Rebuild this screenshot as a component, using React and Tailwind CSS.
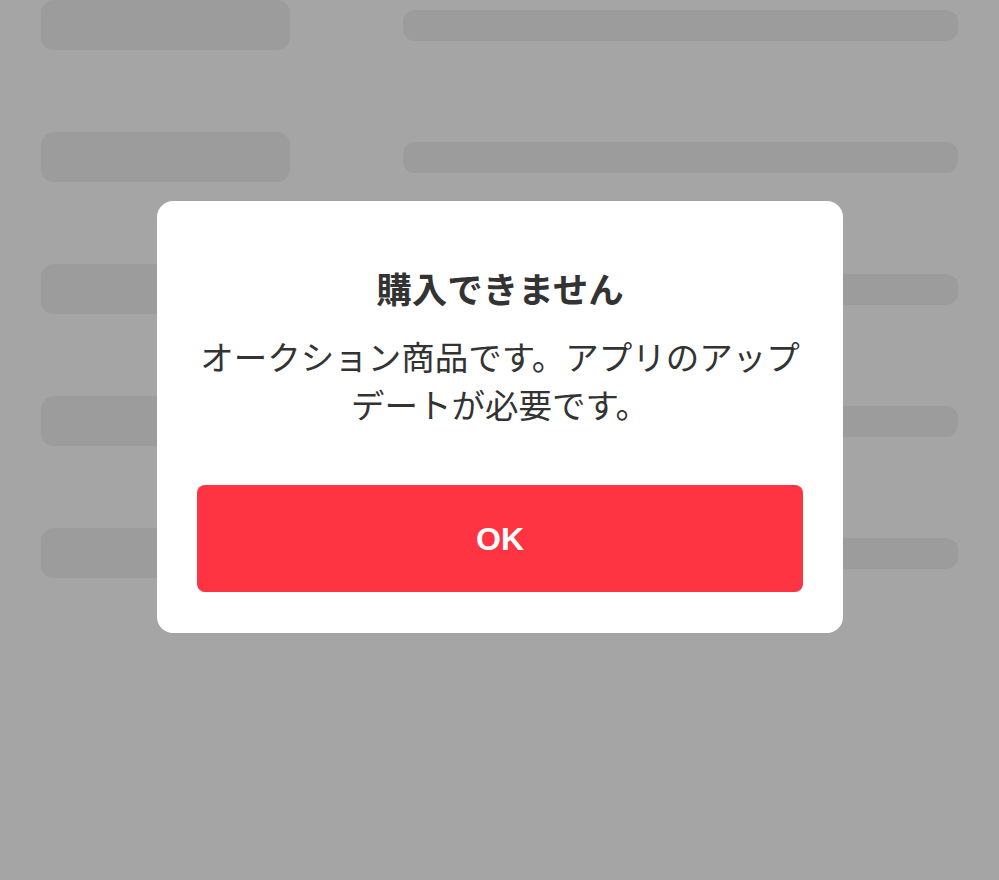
import React from "react";

const ROWS = [0, 1, 2, 3, 4];

function SkeletonRow() {
  return (
    <div className="flex items-center h-[50px]">
      <div className="w-[249px] h-[50px] rounded-[13px] bg-[#9c9c9c] shrink-0" />
      <div className="ml-[113px] flex-1 h-[31px] rounded-[12px] bg-[#9c9c9c]" />
    </div>
  );
}

export default function App() {
  return (
    <div
      className="relative w-[999px] h-[880px] overflow-hidden bg-[#a5a5a5]"
      style={{ fontFamily: '"Noto Sans CJK JP", "Noto Sans", sans-serif' }}
    >
      {/* Background list placeholder */}
      <div className="flex flex-col gap-[82px] px-[41px] pt-0">
        {ROWS.map((r) => (
          <SkeletonRow key={r} />
        ))}
      </div>

      {/* Alert dialog */}
      <div className="absolute left-[157px] top-[201px] w-[686px] h-[432px] rounded-[16px] bg-white px-[40px] pt-[63px] pb-[41px] flex flex-col">
        <h2 className="text-center text-[35.5px] leading-[48px] font-bold text-[#333333]">
          購入できません
        </h2>
        <p className="mt-[20px] text-center text-[33.5px] leading-[48px] text-[#333333]">
          オークション商品です。アプリのアップ
          <br />
          デートが必要です。
        </p>
        <button
          className="mt-auto h-[107px] w-full rounded-[8px] bg-[#ff3443] text-white text-[32px] font-bold"
          style={{ fontFamily: '"Liberation Sans", Arial, sans-serif' }}
        >
          OK
        </button>
      </div>
    </div>
  );
}
